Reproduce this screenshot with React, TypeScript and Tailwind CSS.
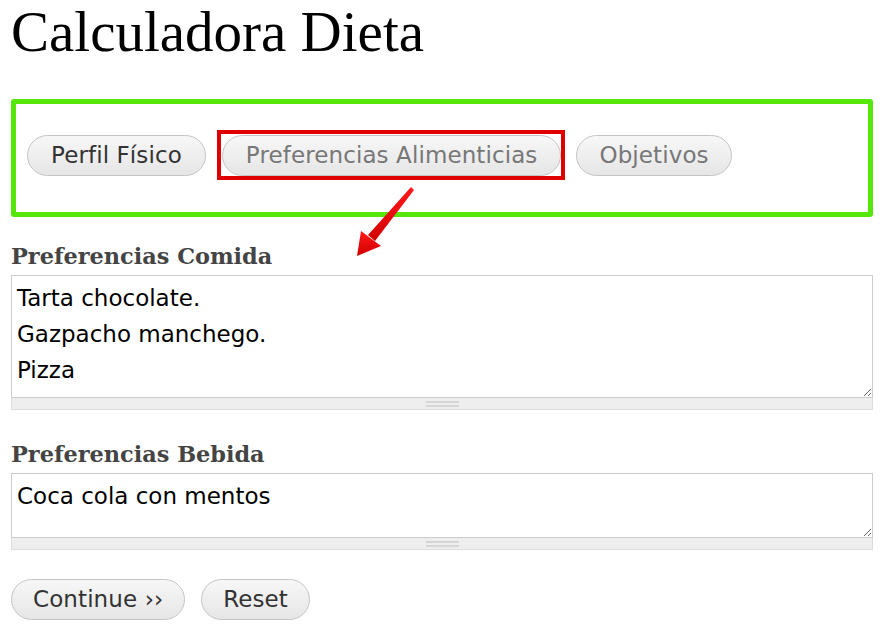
import React from "react";

const sans = "font-['DejaVu_Sans',_'Open_Sans',_sans-serif]";

function PillButton({ label, muted, px = "px-[23px]" }: { label: string; muted?: boolean; px?: string }) {
  return (
    <button
      type="button"
      className={`h-[41px] rounded-full border border-[#c4c4c4] bg-gradient-to-b from-[#f7f7f7] to-[#e6e6e6] ${px} text-[23px] leading-none tracking-[0.1px] ${sans} ${
        muted ? "text-[#777]" : "text-[#333]"
      }`}
    >
      {label}
    </button>
  );
}

function Field({ label, value, height }: { label: string; value: string; height: string }) {
  return (
    <div>
      <h2 className="font-['DejaVu_Serif',_Georgia,_serif] text-[22.4px] leading-[26px] font-bold text-[#444]">{label}</h2>
      <div className="mt-[6px]">
        <textarea
          defaultValue={value}
          className={`block w-full ${height} border border-[#ccc] bg-white px-[5px] pt-[4px] text-[23px] leading-[36px] text-black outline-none ${sans}`}
        />
        <div className="flex h-[12px] items-center justify-center border-x border-b border-[#ddd] bg-[#eee]">
          <div className="h-[6px] w-[33px] border-y-2 border-[#d6d6d6]" />
        </div>
      </div>
    </div>
  );
}

export default function App() {
  return (
    <div className="relative h-[630px] w-[887px] overflow-hidden bg-white pl-[11px] pr-[14px]">
      <h1 className="pt-[4px] font-['Liberation_Serif',_Georgia,_serif] text-[57px] leading-[56px] text-black">
        Calculadora Dieta
      </h1>

      <div className="mt-[39px] flex h-[118px] items-center rounded-[3px] border-[5px] border-[#55e60a] pl-[11px] pt-0 pb-[5px]">
        <PillButton label="Perfil Físico" />
        <div className="relative ml-[16px]">
          <PillButton label="Preferencias Alimenticias" muted />
          <span className="pointer-events-none absolute -top-[5px] -right-[4px] -bottom-[4px] -left-[5px] border-4 border-[#e00000]" />
        </div>
        <div className="ml-[15px]">
          <PillButton label="Objetivos" muted px="px-[22px]" />
        </div>
      </div>

      <div className="mt-[26px]">
        <Field label="Preferencias Comida" value={"Tarta chocolate.\nGazpacho manchego.\nPizza"} height="h-[123px]" />
      </div>
      <div className="mt-[31px]">
        <Field label="Preferencias Bebida" value="Coca cola con mentos" height="h-[65px]" />
      </div>

      <div className="mt-[29px] flex gap-[16px]">
        <PillButton label="Continue ››" px="px-[21px]" />
        <PillButton label="Reset" px="px-[21px]" />
      </div>

      <svg className="pointer-events-none absolute left-0 top-0" width="887" height="630" viewBox="0 0 887 630">
        <defs>
          <linearGradient id="arrowRed" x1="0" y1="0" x2="0" y2="1">
            <stop offset="0" stopColor="#ff1a1a" />
            <stop offset="1" stopColor="#d10000" />
          </linearGradient>
        </defs>
        <polygon points="411,187 414,190 375,241 368,235" fill="url(#arrowRed)" />
        <polygon points="357,256 361,231 381,246" fill="url(#arrowRed)" />
      </svg>
    </div>
  );
}
